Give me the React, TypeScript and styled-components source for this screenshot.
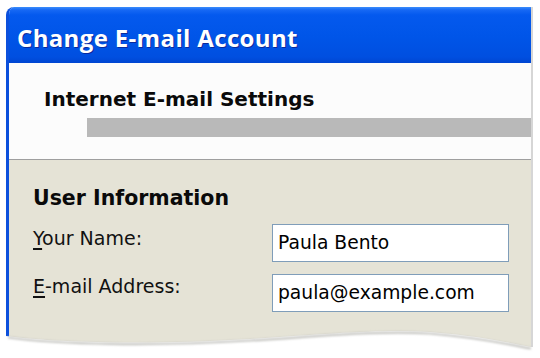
import React from "react";
import styled, { createGlobalStyle } from "styled-components";

const GlobalStyle = createGlobalStyle`
  html, body {
    margin: 0;
    padding: 0;
    background: #ffffff;
    overflow: hidden;
  }
  body {
    font-family: "DejaVu Sans", Verdana, sans-serif;
  }
`;

const Page = styled.div`
  width: 540px;
  height: 358px;
  padding: 7px 0 0 6px;
  box-sizing: border-box;
`;

const Window = styled.div`
  position: relative;
  width: 522px;
  border-left: 3px solid #0c50dc;
  border-right: 2px solid #d6d6d6;
  border-top-left-radius: 8px;
`;

const TitleBar = styled.div`
  height: 56px;
  box-sizing: border-box;
  padding: 15px 0 0 8px;
  border-top-left-radius: 5px 8px;
  background: linear-gradient(
    180deg,
    #3b8dfb 0px,
    #1668f4 3px,
    #0459ee 8px,
    #0055e8 30px,
    #004fe0 50px,
    #0046d2 56px
  );
  font-family: "Open Sans", "DejaVu Sans", sans-serif;
  font-weight: 700;
  font-size: 24px;
  line-height: 32px;
  letter-spacing: 0.35px;
  color: #ffffff;
  text-shadow: 1px 1px 0 #0b2a9c;
`;

const Header = styled.div`
  height: 97px;
  box-sizing: border-box;
  padding: 24px 0 0 35px;
  background: #fcfcfc;
  border-bottom: 1px solid #9f9f9f;
`;

const HeaderTitle = styled.div`
  font-weight: 700;
  font-size: 20px;
  line-height: 24px;
  color: #0a0a0a;
`;

const ProgressBar = styled.div`
  height: 19px;
  margin: 7px 0 0 43px;
  background: #b9b9b9;
`;

const Body = styled.div`
  height: 190px;
  box-sizing: border-box;
  padding: 26px 0 0 24px;
  background: #e5e3d6;
`;

const SectionTitle = styled.div`
  font-weight: 700;
  font-size: 20.5px;
  line-height: 24px;
  color: #0a0a0a;
`;

const Fields = styled.div`
  display: grid;
  grid-template-columns: 239px 237px;
  row-gap: 12px;
  margin-top: 14px;
`;

const Label = styled.label<{ $offset: number }>`
  padding-top: ${(p) => p.$offset}px;
  font-size: 19px;
  line-height: 24px;
  color: #111111;

  u {
    text-decoration-thickness: 1.5px;
    text-underline-offset: 3px;
  }
`;

const Field = styled.div`
  height: 38px;
  box-sizing: border-box;
  padding-left: 5px;
  border: 1px solid #7f9db9;
  background: #ffffff;
  font-size: 18.7px;
  line-height: 36px;
  color: #000000;
`;

const PaperEdge = styled.svg`
  position: absolute;
  left: -3px;
  top: 315px;
  width: 534px;
  height: 36px;
  display: block;
`;

const TornBottom = () => (
  <PaperEdge viewBox="6 322 534 36">
    <defs>
      <filter id="soft" x="-5%" y="-50%" width="110%" height="200%">
        <feGaussianBlur stdDeviation="1.3" />
      </filter>
    </defs>
    <path
      d="M6,336 C60,343 150,345 250,339 C330,334 380,329 430,332 C480,336 510,343 531,347 L540,347 L540,358 L6,358 Z"
      fill="#ffffff"
    />
    <path
      d="M8,337.5 C60,344.5 150,346.5 250,340.5 C330,335.5 380,330.5 430,333.5 C480,337.5 510,344.5 531,348.5"
      fill="none"
      stroke="#c4c4c0"
      strokeWidth="2.2"
      filter="url(#soft)"
    />
  </PaperEdge>
);

export default function App() {
  return (
    <>
      <GlobalStyle />
      <Page>
        <Window>
          <TitleBar>Change E-mail Account</TitleBar>
          <Header>
            <HeaderTitle>Internet E-mail Settings</HeaderTitle>
            <ProgressBar />
          </Header>
          <Body>
            <SectionTitle>User Information</SectionTitle>
            <Fields>
              <Label $offset={2}>
                <u>Y</u>our Name:
              </Label>
              <Field>Paula Bento</Field>
              <Label $offset={0}>
                <u>E</u>-mail Address:
              </Label>
              <Field>paula@example.com</Field>
            </Fields>
          </Body>
          <TornBottom />
        </Window>
      </Page>
    </>
  );
}
